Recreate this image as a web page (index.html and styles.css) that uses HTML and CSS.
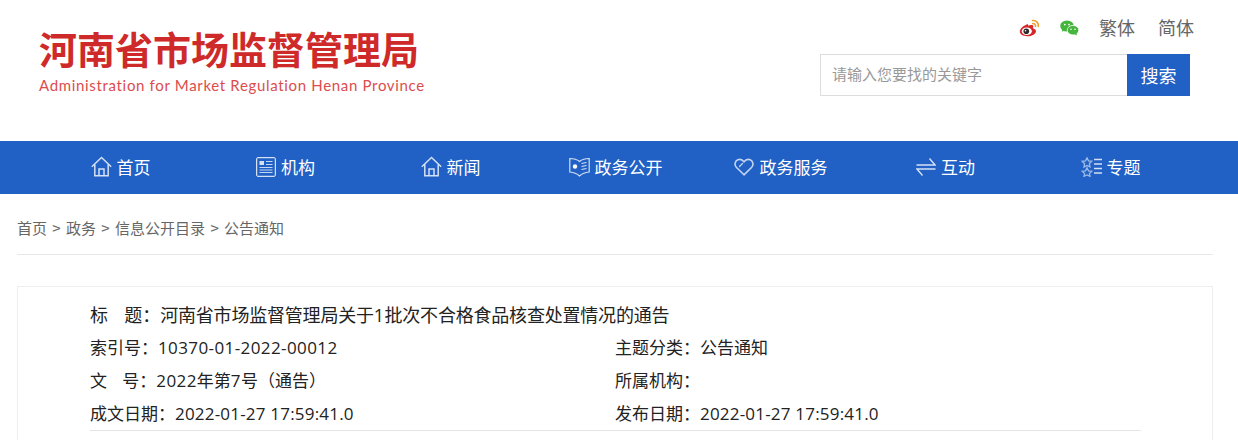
FILE: index.html
```html
<!DOCTYPE html>
<html lang="zh-CN">
<head>
  <meta charset="UTF-8" />
  <title>河南省市场监督管理局</title>
  <link rel="stylesheet" href="styles.css">
</head>
<body>
  <header class="top">
    <div class="logo">
      <div class="logo-cn">河南省市场监督管理局</div>
      <div class="logo-en">Administration for Market Regulation Henan Province</div>
    </div>
    <div class="tools">
      <div class="tool-links">
        <svg class="ico-weibo" width="21" height="18" viewBox="0 0 21 18">
          <path d="M8.500 5.200C4.600 6.300.8 9.600.8 12.600c0 2.800 3.500 4.700 7.500 4.700 5 0 8.700-2.700 8.700-5.100 0-1.500-1.300-2.300-2.500-2.700-.4-.1-.6-.2-.4-.8.5-1.300.1-2.300-1-2.600-1.100-.3-2.800.2-3.800.7 0-1.200-.4-2.100-.8-1.600z" fill="#d6282c"/>
          <ellipse cx="7.800" cy="12.200" rx="5" ry="3.800" fill="#fff"/>
          <circle cx="7.300" cy="12.300" r="2.800" fill="#2a2a2a"/>
          <circle cx="6.500" cy="11.700" r=".8" fill="#fff"/>
          <path d="M13.500 1.500c3.500-.5 6.300 2.300 5.700 6M13.800 4.600c1.700-.3 3 1 2.700 2.800" fill="none" stroke="#f0a030" stroke-width="1.600" stroke-linecap="round"/>
        </svg>
        <svg class="ico-wechat" width="19" height="16" viewBox="0 0 19 16">
          <ellipse cx="7" cy="6" rx="6.800" ry="5.600" fill="#45b53c"/>
          <path d="M2.600 9l-.7 2.800L5 10.300z" fill="#45b53c"/>
          <ellipse cx="13" cy="10.200" rx="5.800" ry="4.800" fill="#45b53c" stroke="#fff" stroke-width=".8"/>
          <path d="M16.400 13l.5 2.400-2.700-1.300z" fill="#45b53c"/>
          <circle cx="4.800" cy="4.600" r=".9" fill="#fff"/>
          <circle cx="9" cy="4.600" r=".9" fill="#fff"/>
          <circle cx="11" cy="9.200" r=".8" fill="#fff"/>
          <circle cx="15" cy="9.200" r=".8" fill="#fff"/>
        </svg>
        <a class="lang">繁体</a>
        <a class="lang">简体</a>
      </div>
      <form class="search">
        <input class="search-input" type="text" placeholder="请输入您要找的关键字" />
        <button class="search-btn" type="button">搜索</button>
      </form>
    </div>
  </header>

  <nav class="nav">
    <div class="nav-inner">
      <a class="nav-item">
        <svg width="21" height="21" viewBox="0 0 21 21" fill="none" stroke="#d3e0f5" stroke-width="1.500"><path d="M.8 10.800L10.500 1.500l9.700 9.300M3.800 8.500v11.200h13.400V8.500M8 19.700v-6.700h5v6.700"/></svg>
        首页
      </a>
      <a class="nav-item">
        <svg width="20" height="20" viewBox="0 0 20 20" fill="none" stroke="#fff"><rect x=".7" y=".7" width="18.600" height="18.600" rx="1"/><rect x="3.500" y="4" width="4.500" height="4" fill="#d3e0f5" stroke="none"/><path d="M10 4.500h6.500M10 7.500h6.500M3.500 10.500h13M3.500 13h13M3.500 15.500h13" stroke="#c4d6f2"/></svg>
        机构
      </a>
      <a class="nav-item">
        <svg width="21" height="21" viewBox="0 0 21 21" fill="none" stroke="#d3e0f5" stroke-width="1.500"><path d="M.8 10.800L10.500 1.500l9.700 9.300M3.800 8.500v11.200h13.400V8.500M8 19.700v-6.700h5v6.700"/></svg>
        新闻
      </a>
      <a class="nav-item">
        <svg width="21" height="20" viewBox="0 0 21 20" fill="none" stroke="#d3e0f5" stroke-width="1.200"><path d="M.8 1.500c3.500 0 7 .8 9.700 3 2.700-2.200 6.200-3 9.700-3v13.500c-3.500.3-7 1.500-9.700 4-2.700-2.500-6.200-3.700-9.700-4z"/><circle cx="6" cy="9.500" r="2.200" fill="#fff" stroke="none"/><path d="M12.500 6.500l5-1M12.500 9.500l5-1M12.500 12.500l5-1"/></svg>
        政务公开
      </a>
      <a class="nav-item nav-item-wide">
        <svg width="20" height="18" viewBox="0 0 20 18" fill="none" stroke="#c4d6f2" stroke-width="1.600" stroke-linecap="round"><path d="M10 16.800L2.500 9.500C0 7 1 3 3.800 1.800c2.500-1 4.700 0 6.200 2 1.500-2 3.700-3 6.200-2C19 3 20 7 17.500 9.500z"/><path d="M5.500 8.500l3-3" stroke-width="1.200"/></svg>
        政务服务
      </a>
      <a class="nav-item">
        <svg width="20" height="20" viewBox="0 0 20 20" fill="none" stroke="#d3e0f5" stroke-width="1.400"><path d="M.5 8h18.500L13.500 1.500M19.500 12H1l5.500 6.500"/></svg>
        互动
      </a>
      <a class="nav-item nav-item-tight">
        <svg width="22" height="20" viewBox="0 0 22 20" fill="none" stroke="#9dbbe9" stroke-width="1.300"><path d="M6 .8l1.500 3 3.300.5-2.400 2.300.6 3.300L6 8.400 3 10l.6-3.300L1.200 4.300l3.300-.5zM6 10.800l1.500 3 3.300.5-2.400 2.300.6 2.700L6 18 3 19.300l.6-2.700-2.400-2.300 3.300-.5z"/><path d="M13 2.500h8M13 7h8M13 11.500h8M13 16h8" stroke="#d3e0f5"/></svg>
        专题
      </a>
    </div>
  </nav>

  <div class="crumbs">
    <a>首页</a><span class="sep">&gt;</span><a>政务</a><span class="sep">&gt;</span><a>信息公开目录</a><span class="sep">&gt;</span><a>公告通知</a>
  </div>

  <section class="info-box">
    <div class="info">
      <div class="row row-title">标<span class="gap"></span>题：<span class="title-text">河南省市场监督管理局关于<span class="num">1</span>批次不合格食品核查处置情况的通告</span></div>
      <div class="row">
        <div class="cell">索引号：<span class="num">10370-01-2022-00012</span></div>
        <div class="cell">主题分类：公告通知</div>
      </div>
      <div class="row">
        <div class="cell">文<span class="gap"></span>号：<span class="num">2022</span>年第<span class="num">7</span>号（通告）</div>
        <div class="cell">所属机构：</div>
      </div>
      <div class="row">
        <div class="cell">成文日期：<span class="num num-date">2022-01-27 17:59:41.0</span></div>
        <div class="cell">发布日期：<span class="num num-date">2022-01-27 17:59:41.0</span></div>
      </div>
    </div>
  </section>
</body>
</html>
```

FILE: styles.css
```css
* {
  box-sizing: border-box;
}

html, body {
  height: 440px;
  overflow: hidden;
}

body {
  margin: 0;
  background-color: white;
  color: #222;
  font-family: "Noto Sans CJK SC", "Open Sans", sans-serif;
  font-size: 17px;
}

.top {
  height: 141px;
  display: flex;
  justify-content: space-between;
  padding: 25px 44px 0 39px;
}

.logo-cn {
  color: #cf2a2a;
  font-size: 38px;
  font-weight: 700;
  line-height: 46px;
  white-space: nowrap;
}

.logo-en {
  color: #dc4c4c;
  font-family: "Lato", sans-serif;
  font-size: 15px;
  line-height: 20px;
  letter-spacing: 0.67px;
  margin-top: 4px;
  white-space: nowrap;
}

.tools {
  width: 374px;
}

.tool-links {
  display: flex;
  justify-content: flex-end;
  align-items: center;
  height: 28px;
  margin-top: -11px;
  margin-bottom: 12px;
}

.ico-weibo {
  margin-right: 20px;
}

.ico-wechat {
  margin-right: 20px;
}

.lang {
  color: #666;
  font-size: 18px;
  line-height: 26px;
  margin-top: -2px;
}

.lang + .lang {
  margin-left: 23px;
}

.search {
  display: flex;
  height: 42px;
  margin-right: 4px;
}

.search-input {
  flex: 1;
  min-width: 0;
  height: 42px;
  border: 1px solid #ddd;
  border-right: none;
  padding: 0 11px 3px;
  font-family: inherit;
  font-size: 15px;
  outline: none;
}

.search-input::placeholder {
  color: #999;
}

.search-btn {
  width: 63px;
  border: none;
  background-color: #2160c4;
  color: white;
  font-family: inherit;
  font-size: 18px;
  padding: 0;
}

.nav {
  height: 53px;
  background-color: #2160c4;
}

.nav-inner {
  display: grid;
  grid-template-columns: repeat(7, 165px);
  height: 100%;
  margin-left: 38px;
}

.nav-item {
  display: flex;
  justify-content: center;
  align-items: center;
  gap: 5px;
  padding-bottom: 2px;
  color: white;
  font-size: 17px;
}

.nav-item-wide {
  gap: 6px;
}

.nav-item-tight {
  gap: 4px;
}

.crumbs {
  display: flex;
  height: 61px;
  margin: 0 25px 0 17px;
  border-bottom: 1px solid #e8e8e8;
  color: #666;
  font-size: 15px;
  line-height: 68px;
}

.sep {
  width: 19px;
  text-align: center;
}

.info-box {
  margin: 31px 25px 0 17px;
  border: 1px solid #eee;
  border-bottom: none;
  padding: 11px 71px 0 72px;
  height: 154px;
}

.info {
  border-bottom: 1px solid #e5e5e5;
  padding-bottom: 1px;
}

.row {
  display: flex;
  height: 33px;
  line-height: 33px;
}

.row-title {
  display: block;
  height: 32px;
  font-size: 18px;
}

.title-text {
  letter-spacing: -0.2px;
}

.gap {
  display: inline-block;
  width: 0.9em;
}

.num {
  font-family: "Open Sans", sans-serif;
  letter-spacing: 0.4px;
}

.num-date {
  letter-spacing: 0.2px;
}

.cell {
  width: 525px;
  white-space: nowrap;
}
```
